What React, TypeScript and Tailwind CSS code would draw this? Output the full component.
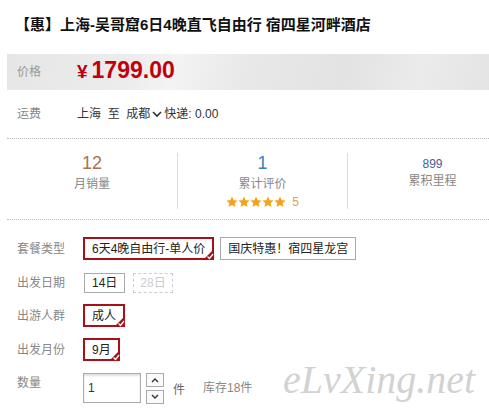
import React from 'react'

const font = "font-['Liberation_Sans','Noto_Sans_CJK_SC',sans-serif]"

function Check() {
  return (
    <span className="absolute -bottom-[2px] -right-[2px] w-[11px] h-[11px]">
      <svg width="11" height="11" viewBox="0 0 11 11">
        <polygon points="11,0 11,11 0,11" fill="#a80f17" />
        <polyline points="4.5,7.5 6.5,9.5 10,5" fill="none" stroke="#fff" strokeWidth="1.3" />
      </svg>
    </span>
  )
}

function Tag({ text, selected, disabled, h = 'h-[23px]' }: { text: string; selected?: boolean; disabled?: boolean; h?: string }) {
  if (selected) {
    return (
      <span className={`relative inline-flex items-center ${h} px-[7px] border-2 border-[#a80f17] text-[12px] text-[#222]`}>
        {text}
        <Check />
      </span>
    )
  }
  if (disabled) {
    return (
      <span className={`inline-flex items-center ${h} px-[6px] border border-dashed border-[#ccc] text-[12px] text-[#ccc]`}>{text}</span>
    )
  }
  return (
    <span className={`inline-flex items-center ${h} px-[7px] border border-[#aaa] text-[12px] text-[#222]`}>{text}</span>
  )
}

function Star() {
  return (
    <svg width="12" height="12" viewBox="0 0 24 24">
      <path d="M12 1l3.3 7.3 7.9.8-6 5.3 1.8 7.8L12 18.2 5 22.2l1.8-7.8-6-5.3 7.9-.8z" fill="#f6a21a" />
    </svg>
  )
}

function Row({ label, children, className = '' }: { label: string; children: React.ReactNode; className?: string }) {
  return (
    <div className={`flex items-center ${className}`}>
      <span className="w-[66px] text-[12px] text-[#888]">{label}</span>
      <div className="flex items-center gap-[6px]">{children}</div>
    </div>
  )
}

export default function App() {
  return (
    <div className={`relative w-[489px] h-[414px] overflow-hidden bg-white ${font}`}>
      <h1 className="pt-[15px] pl-[15px] h-[54px] text-[15px] leading-[20px] font-bold text-[#111]">
        【惠】上海-吴哥窟6日4晚直飞自由行 宿四星河畔酒店
      </h1>

      <div className="ml-[7px] h-[36px] flex items-center bg-[linear-gradient(105deg,#e6e6e6_0%,#ececec_25%,#f3f3f3_35%,#e8e8e8_50%,#e3e3e3_70%,#ebebeb_85%,#e4e4e4_100%)]">
        <span className="pl-[10px] w-[70px] text-[12px] text-[#999]">价格</span>
        <span className="text-[#c0000b] font-bold flex items-baseline">
          <span className="text-[19px] mr-[4px]">¥</span>
          <span className="text-[23px] leading-[26px]">1799.00</span>
        </span>
      </div>

      <div className="ml-[17px] h-[48px] flex items-center text-[12px]">
        <span className="w-[60px] text-[#888]">运费</span>
        <span className="text-[#333] flex items-center">
          上海&nbsp;&nbsp;至&nbsp;&nbsp;成都
          <svg width="10" height="8" viewBox="0 0 10 8" className="mx-[2px]">
            <polyline points="1,2 5,6 9,2" fill="none" stroke="#333" strokeWidth="1.6" />
          </svg>
          快递:&nbsp;0.00
        </span>
      </div>

      <div className="ml-[7px] border-t border-dotted border-[#bbb]" />

      <div className="ml-[7px] pt-[14px] pb-[10px] flex w-[520px] border-b border-dotted border-[#bbb]">
        <div className="w-[170px] h-[56px] flex flex-col items-center">
          <span className="text-[18px] leading-[20px] text-[#a8744e]">12</span>
          <span className="mt-[3px] text-[12px] leading-[16px] text-[#888]">月销量</span>
        </div>
        <div className="w-[170px] h-[56px] flex flex-col items-center border-l border-[#ddd]">
          <span className="text-[18px] leading-[20px] text-[#3a80ba]">1</span>
          <span className="mt-[3px] text-[12px] leading-[16px] text-[#888]">累计评价</span>
          <span className="mt-[2px] flex items-center text-[12px] leading-[16px] text-[#e8a03a]">
            <Star /><Star /><Star /><Star /><Star />
            <span className="ml-[6px]">5</span>
          </span>
        </div>
        <div className="w-[170px] h-[56px] flex flex-col items-center border-l border-[#ddd]">
          <span className="mt-[3px] text-[12px] leading-[16px] text-[#4a5c9c]">899</span>
          <span className="mt-[1px] text-[12px] leading-[16px] text-[#888]">累积里程</span>
        </div>
      </div>

      <div className="ml-[17px]">
        <Row label="套餐类型" className="mt-[17px]">
          <Tag text="6天4晚自由行-单人价" selected />
          <Tag text="国庆特惠！宿四星龙宫" />
        </Row>
        <Row label="出发日期" className="mt-[13px]">
          <span className="ml-[1px] flex gap-[8px]">
            <Tag text="14日" h="h-[20px]" />
            <Tag text="28日" h="h-[20px]" disabled />
          </span>
        </Row>
        <Row label="出游人群" className="mt-[11px]">
          <Tag text="成人" selected />
        </Row>
        <Row label="出发月份" className="mt-[11px]">
          <Tag text="9月" selected />
        </Row>
        <div className="mt-[12px] flex items-start">
          <span className="w-[66px] mt-[1px] text-[12px] text-[#888]">数量</span>
          <div className="w-[58px] h-[30px] border border-[#aaa] shadow-[inset_0_2px_2px_rgba(0,0,0,0.12)] flex items-center pl-[4px] text-[12px] text-[#333]">
            1
          </div>
          <div className="ml-[5px] flex flex-col gap-[3px]">
            <span className="w-[18px] h-[14px] border border-[#aaa] bg-[#fafafa] flex items-center justify-center">
              <svg width="8" height="6" viewBox="0 0 8 6"><polyline points="1,5 4,2 7,5" fill="none" stroke="#333" strokeWidth="1.4" /></svg>
            </span>
            <span className="w-[18px] h-[14px] border border-[#aaa] bg-[#fafafa] flex items-center justify-center">
              <svg width="8" height="6" viewBox="0 0 8 6"><polyline points="1,1 4,4 7,1" fill="none" stroke="#333" strokeWidth="1.4" /></svg>
            </span>
          </div>
          <span className="ml-[9px] mt-[8px] text-[12px] text-[#666]">件</span>
          <span className="ml-[18px] mt-[6px] text-[12px] text-[#888]">库存18件</span>
        </div>
      </div>

      <span className="absolute left-[283px] top-[358px] font-['Liberation_Serif',serif] italic text-[40px] leading-[44px] text-[#d2d2d2]">
        eLvXing.net
      </span>
    </div>
  )
}
